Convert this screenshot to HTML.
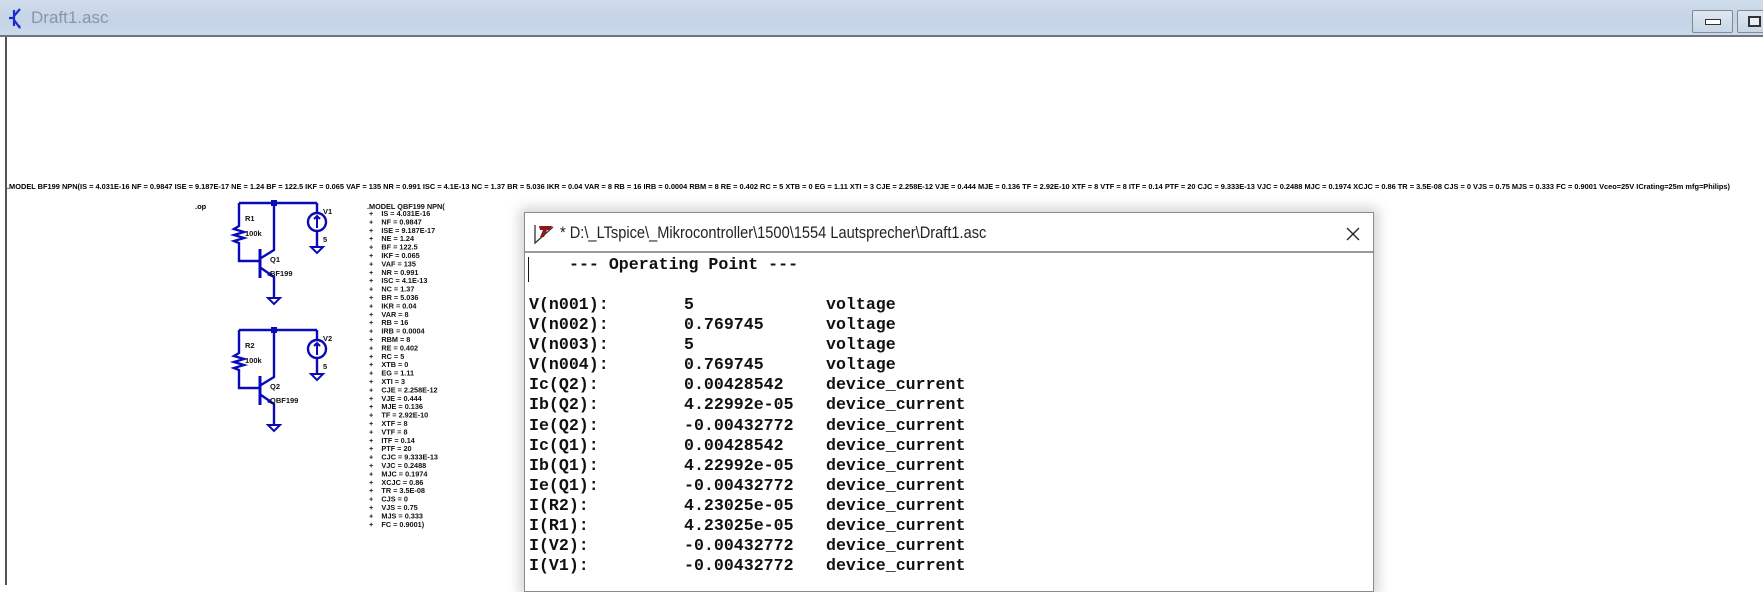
<!DOCTYPE html>
<html><head><meta charset="utf-8"><style>
*{margin:0;padding:0;box-sizing:border-box}
body{width:1763px;height:585px;overflow:hidden;background:#fff;position:relative;font-family:"Liberation Sans",sans-serif}
#tb{position:absolute;left:0;top:0;width:1763px;height:37px;background:linear-gradient(#d0dcea,#c4d3e6 60%,#cbd9ea);border-bottom:2px solid #6d7480}
#tb .t{position:absolute;left:31px;top:8px;font-size:17px;color:#8a96a6}
.btn{position:absolute;top:10px;height:23px;border:1px solid #7f8a99;border-radius:2px;background:linear-gradient(#dfe7f1,#c9d6e6)}
#cv{position:absolute;left:5px;top:37px;width:1758px;height:548px;border-left:2px solid #555;background:#fff}
#dlg{position:absolute;left:524px;top:212px;width:850px;height:380px;background:#fff;border:1px solid #8c8c8c;box-shadow:0 0 12px 4px rgba(0,0,0,.18)}
#dlg .tt{position:absolute;left:0;top:0;width:848px;height:40px;border-bottom:2px solid #9a9a9a;background:#fff}
#dlg .tt span{position:absolute;left:35px;top:10px;font-size:17px;color:#222;white-space:nowrap;transform:scaleX(0.86);transform-origin:left}
.op{position:absolute;top:42px;font-family:"Liberation Mono",monospace;font-weight:bold;font-size:16.6px;line-height:20.07px;white-space:pre;color:#111}
</style></head><body>
<div id="tb">
<svg style="position:absolute;left:6px;top:6px" width="22" height="26"><path d="M3 12h5M8 4v16M8 10l6-7M8 14l6 8" stroke="#1a2bd0" stroke-width="2.2" fill="none"/><path d="M12 20l3 3-1-4z" fill="#1a2bd0"/></svg>
<span class="t">Draft1.asc</span>
<div class="btn" style="left:1692px;width:41px"><div style="position:absolute;left:12px;top:8px;width:16px;height:6px;border:1px solid #333;background:#fff"></div></div>
<div class="btn" style="left:1737px;width:40px"><div style="position:absolute;left:10px;top:5px;width:13px;height:11px;border:2px solid #333;background:#e8eef6"></div></div>
</div>
<div id="cv"></div>
<svg style="position:absolute;left:0;top:0" width="1763" height="585" font-family="Liberation Sans,sans-serif" font-weight="bold">
<text x="7" y="189" font-size="7.6" textLength="1723" lengthAdjust="spacingAndGlyphs">.MODEL BF199 NPN(IS = 4.031E-16 NF = 0.9847 ISE = 9.187E-17 NE = 1.24 BF = 122.5 IKF = 0.065 VAF = 135 NR = 0.991 ISC = 4.1E-13 NC = 1.37 BR = 5.036 IKR = 0.04 VAR = 8 RB = 16 IRB = 0.0004 RBM = 8 RE = 0.402 RC = 5 XTB = 0 EG = 1.11 XTI = 3 CJE = 2.258E-12 VJE = 0.444 MJE = 0.136 TF = 2.92E-10 XTF = 8 VTF = 8 ITF = 0.14 PTF = 20 CJC = 9.333E-13 VJC = 0.2488 MJC = 0.1974 XCJC = 0.86 TR = 3.5E-08 CJS = 0 VJS = 0.75 MJS = 0.333 FC = 0.9001 Vceo=25V ICrating=25m mfg=Philips)</text>
<text x="195" y="209" font-size="7.5">.op</text>
<g>
<g stroke="#0a0ab8" stroke-width="2.4" fill="none">
<path d="M239 203H317M239 203V226l-5 3 10 3-10 3 10 3-10 3 5 2V261H259M274 203V250L261 258M261 268L274 277V298M317 203V213M317 231V247"/>
<path d="M260 249V278" stroke-width="3"/>
<circle cx="317" cy="222" r="9"/>
<path d="M317 216V228M314 219l3-3 3 3" stroke-width="2"/>
<path d="M268 298h12l-6 6z M311 247h12l-6 6z" stroke-width="2"/>
</g>
<rect x="271" y="200" width="6" height="6" fill="#0a0ab8"/>
<path d="M267 275l7 3-4-6z" fill="#0a0ab8"/>
<g font-size="7.5" fill="#111"><text x="245" y="221">R1</text><text x="245" y="236">100k</text><text x="270" y="262">Q1</text><text x="270" y="276">BF199</text><text x="323" y="214">V1</text><text x="323" y="242">5</text></g>
</g>
<g transform="translate(0,127)">
<g stroke="#0a0ab8" stroke-width="2.4" fill="none">
<path d="M239 203H317M239 203V226l-5 3 10 3-10 3 10 3-10 3 5 2V261H259M274 203V250L261 258M261 268L274 277V298M317 203V213M317 231V247"/>
<path d="M260 249V278" stroke-width="3"/>
<circle cx="317" cy="222" r="9"/>
<path d="M317 216V228M314 219l3-3 3 3" stroke-width="2"/>
<path d="M268 298h12l-6 6z M311 247h12l-6 6z" stroke-width="2"/>
</g>
<rect x="271" y="200" width="6" height="6" fill="#0a0ab8"/>
<path d="M267 275l7 3-4-6z" fill="#0a0ab8"/>
<g font-size="7.5" fill="#111"><text x="245" y="221">R2</text><text x="245" y="236">100k</text><text x="270" y="262">Q2</text><text x="270" y="276">QBF199</text><text x="323" y="214">V2</text><text x="323" y="242">5</text></g>
</g>
<text x="367" y="209" font-size="7.3" fill="#111">.MODEL QBF199 NPN(</text>
</svg>
<div id="dlg">
<div class="tt">
<svg style="position:absolute;left:8px;top:10px" width="24" height="22"><path d="M2 2V20L20 4" stroke="#333" stroke-width="1.3" fill="none"/><path d="M6 3h13l-2 4h-3l-3 7h-4l3-7h-3z" fill="#8b1a1a"/></svg>
<span>* D:\_LTspice\_Mikrocontroller\1500\1554 Lautsprecher\Draft1.asc</span>
<svg style="position:absolute;left:820px;top:13px" width="16" height="16"><path d="M2 2L14 14M14 2L2 14" stroke="#222" stroke-width="1.3"/></svg>
</div>
<div style="position:absolute;left:3px;top:44px;width:1px;height:25px;background:#111"></div>
<div class="op" style="left:44px">--- Operating Point ---</div>
<div class="op" style="left:4px">

V(n001):
V(n002):
V(n003):
V(n004):
Ic(Q2):
Ib(Q2):
Ie(Q2):
Ic(Q1):
Ib(Q1):
Ie(Q1):
I(R2):
I(R1):
I(V2):
I(V1):</div>
<div class="op" style="left:159px">

5
0.769745
5
0.769745
0.00428542
4.22992e-05
-0.00432772
0.00428542
4.22992e-05
-0.00432772
4.23025e-05
4.23025e-05
-0.00432772
-0.00432772</div>
<div class="op" style="left:301px">

voltage
voltage
voltage
voltage
device_current
device_current
device_current
device_current
device_current
device_current
device_current
device_current
device_current
device_current</div>
</div>
<svg style="position:absolute;left:0;top:0" width="1763" height="585" font-family="Liberation Sans,sans-serif" font-weight="bold" font-size="7.3" fill="#111">
<text x="369" y="216">+&#160;&#160;&#160;&#160;IS = 4.031E-16</text>
<text x="369" y="224.4">+&#160;&#160;&#160;&#160;NF = 0.9847</text>
<text x="369" y="232.8">+&#160;&#160;&#160;&#160;ISE = 9.187E-17</text>
<text x="369" y="241.2">+&#160;&#160;&#160;&#160;NE = 1.24</text>
<text x="369" y="249.6">+&#160;&#160;&#160;&#160;BF = 122.5</text>
<text x="369" y="258">+&#160;&#160;&#160;&#160;IKF = 0.065</text>
<text x="369" y="266.4">+&#160;&#160;&#160;&#160;VAF = 135</text>
<text x="369" y="274.8">+&#160;&#160;&#160;&#160;NR = 0.991</text>
<text x="369" y="283.2">+&#160;&#160;&#160;&#160;ISC = 4.1E-13</text>
<text x="369" y="291.6">+&#160;&#160;&#160;&#160;NC = 1.37</text>
<text x="369" y="300">+&#160;&#160;&#160;&#160;BR = 5.036</text>
<text x="369" y="308.4">+&#160;&#160;&#160;&#160;IKR = 0.04</text>
<text x="369" y="316.8">+&#160;&#160;&#160;&#160;VAR = 8</text>
<text x="369" y="325.2">+&#160;&#160;&#160;&#160;RB = 16</text>
<text x="369" y="333.6">+&#160;&#160;&#160;&#160;IRB = 0.0004</text>
<text x="369" y="342">+&#160;&#160;&#160;&#160;RBM = 8</text>
<text x="369" y="350.4">+&#160;&#160;&#160;&#160;RE = 0.402</text>
<text x="369" y="358.8">+&#160;&#160;&#160;&#160;RC = 5</text>
<text x="369" y="367.2">+&#160;&#160;&#160;&#160;XTB = 0</text>
<text x="369" y="375.6">+&#160;&#160;&#160;&#160;EG = 1.11</text>
<text x="369" y="384">+&#160;&#160;&#160;&#160;XTI = 3</text>
<text x="369" y="392.4">+&#160;&#160;&#160;&#160;CJE = 2.258E-12</text>
<text x="369" y="400.8">+&#160;&#160;&#160;&#160;VJE = 0.444</text>
<text x="369" y="409.2">+&#160;&#160;&#160;&#160;MJE = 0.136</text>
<text x="369" y="417.6">+&#160;&#160;&#160;&#160;TF = 2.92E-10</text>
<text x="369" y="426">+&#160;&#160;&#160;&#160;XTF = 8</text>
<text x="369" y="434.4">+&#160;&#160;&#160;&#160;VTF = 8</text>
<text x="369" y="442.8">+&#160;&#160;&#160;&#160;ITF = 0.14</text>
<text x="369" y="451.2">+&#160;&#160;&#160;&#160;PTF = 20</text>
<text x="369" y="459.6">+&#160;&#160;&#160;&#160;CJC = 9.333E-13</text>
<text x="369" y="468">+&#160;&#160;&#160;&#160;VJC = 0.2488</text>
<text x="369" y="476.4">+&#160;&#160;&#160;&#160;MJC = 0.1974</text>
<text x="369" y="484.8">+&#160;&#160;&#160;&#160;XCJC = 0.86</text>
<text x="369" y="493.2">+&#160;&#160;&#160;&#160;TR = 3.5E-08</text>
<text x="369" y="501.6">+&#160;&#160;&#160;&#160;CJS = 0</text>
<text x="369" y="510">+&#160;&#160;&#160;&#160;VJS = 0.75</text>
<text x="369" y="518.4">+&#160;&#160;&#160;&#160;MJS = 0.333</text>
<text x="369" y="526.8">+&#160;&#160;&#160;&#160;FC = 0.9001)</text>
</svg>
</body></html>
